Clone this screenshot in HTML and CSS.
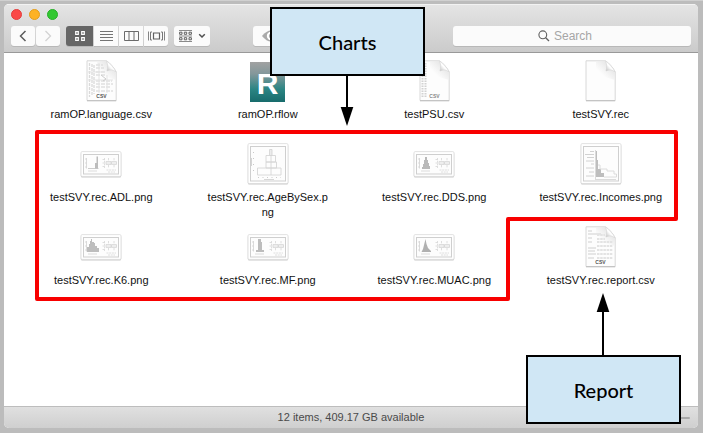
FILE: index.html
```html
<!DOCTYPE html>
<html lang="en">
<head>
<meta charset="utf-8">
<title>Files</title>
<link rel="stylesheet" href="styles.css">
</head>
<body>
<svg class="defs" width="0" height="0" aria-hidden="true">
  <defs>
    <linearGradient id="fold" x1="0" y1="1" x2="1" y2="0">
      <stop offset="0" stop-color="#b4b4b4"/><stop offset=".45" stop-color="#fff"/><stop offset="1" stop-color="#ddd"/>
    </linearGradient>
    <linearGradient id="shade" x1="0" y1="1" x2="1" y2="0">
      <stop offset=".3" stop-color="#fdfdfd"/><stop offset=".75" stop-color="#e2e2e2"/>
    </linearGradient>
    <linearGradient id="teal" x1="0" y1="0" x2="0" y2="1">
      <stop offset="0" stop-color="#a2a2a2"/><stop offset=".3" stop-color="#83979a"/><stop offset=".68" stop-color="#2b8583"/><stop offset="1" stop-color="#176b6c"/>
    </linearGradient>
    <symbol id="page" viewBox="0 0 31 42">
      <path d="M1 .8H20.500C24 3 28 7.500 30.200 12V40.500H1Z" fill="#fdfdfd" stroke="#d8d8d8"/>
      <path d="M1 40.800H30.200" stroke="#bdbdbd"/>
      <path d="M11 1.300H20.500L29.700 12V20L11 14Z" fill="url(#shade)" opacity=".8"/>
      <path d="M20.500 1C24 3 28 7.500 30.200 12C27 9.500 24 9.500 21 11C22 7.500 21.800 4 20.500 1Z" fill="url(#fold)" stroke="#d0d0d0" stroke-width=".5"/>
    </symbol>
    <symbol id="wide" viewBox="0 0 42 27">
      <rect x=".8" y="1.200" width="40.400" height="25.200" rx="1.500" fill="#c9c9c9"/>
      <rect x="1" y=".6" width="40" height="24.800" rx="1.200" fill="#fff" stroke="#dadada" stroke-width=".8"/>
      <rect x="3.500" y="3.500" width="35" height="19.500" fill="#fdfdfd" stroke="#cfcfcf"/>
    </symbol>
    <symbol id="square" viewBox="0 0 42 42">
      <rect x=".8" y="1.200" width="40.400" height="40.200" rx="1.500" fill="#c9c9c9"/>
      <rect x="1" y=".6" width="40" height="39.900" rx="1.200" fill="#fff" stroke="#dadada" stroke-width=".8"/>
      <rect x="3.500" y="3.500" width="35" height="34.500" fill="#fdfdfd" stroke="#cfcfcf"/>
    </symbol>
    <symbol id="boxes" viewBox="0 0 42 27">
      <path d="M24.500 7V17M22.500 8.500H24.500M22.500 12H24.500M22.500 15.500H24.500M28.500 7V10M28.500 14V17M34 7V10M34 14V17M26.500 19H36M28 21H35" fill="none" stroke="#d6d6d6" stroke-width=".8" stroke-dasharray="2 .7"/>
      <path d="M26 10.500H31V13.500H26ZM31.500 10.500H36.500V13.500H31.500ZM26 12H36.500" fill="none" stroke="#d6d6d6" stroke-width=".8"/>
      <path d="M6.500 7V17.500M5 8H6.500M5 12H6.500M5 16H6.500M8 20H17" stroke="#d2d2d2" stroke-width=".8" fill="none"/>
    </symbol>
  </defs>
</svg>

<main class="window">
  <header class="titlebar">
    <div class="lights">
      <button class="light red" aria-label="Close"></button>
      <button class="light amber" aria-label="Minimize"></button>
      <button class="light green" aria-label="Zoom"></button>
    </div>
    <div class="toolbar">
      <div class="nav">
        <button class="tool" aria-label="Back"><svg width="10" height="14" viewBox="0 0 10 14"><path d="M7.500 2L2.500 7L7.500 12" fill="none" stroke="#5c5c5c" stroke-width="1.500"/></svg></button>
        <button class="tool" aria-label="Forward"><svg width="10" height="14" viewBox="0 0 10 14"><path d="M2.500 2L7.500 7L2.500 12" fill="none" stroke="#d2d2d2" stroke-width="1.300"/></svg></button>
      </div>
      <div class="views">
        <button class="tool active" aria-label="Icons"><svg width="10" height="10" viewBox="0 0 10 10"><path d="M.7 .7H3.300V3.300H.7ZM6.700 .7H9.300V3.300H6.700ZM.7 6.700H3.300V9.300H.7ZM6.700 6.700H9.300V9.300H6.700Z" fill="none" stroke="#fff" stroke-width="1.200"/></svg></button>
        <button class="tool" aria-label="List"><svg width="13" height="10" viewBox="0 0 13 10"><path d="M0 .5H13M0 3.500H13M0 6.500H13M0 9.500H13" stroke="#747474"/></svg></button>
        <button class="tool" aria-label="Columns"><svg width="15" height="10" viewBox="0 0 15 10"><path d="M.5 .5H14.500V9.500H.5ZM5 .5V9.500M10 .5V9.500" fill="none" stroke="#6b6b6b"/></svg></button>
        <button class="tool" aria-label="Cover Flow"><svg width="17" height="10" viewBox="0 0 17 10"><path d="M5.500 2H11.500V8H5.500Z" fill="none" stroke="#606060" stroke-width="1.200"/><path d="M.5 .5V9.500M16.500 .5V9.500" stroke="#858585"/><path d="M4 1H2.500V9H4M13 1H14.500V9H13" fill="none" stroke="#777"/></svg></button>
      </div>
      <button class="tool arrange" aria-label="Arrange"><svg width="13" height="12" viewBox="0 0 13 12"><path d="M0 .5H13M0 6H13M0 11.500H13" stroke="#8a8a8a"/><path d="M.6 2.200H3V4.300H.6ZM5.300 2.200H7.700V4.300H5.300ZM10 2.200H12.400V4.300H10ZM.6 7.700H3V9.800H.6ZM5.300 7.700H7.700V9.800H5.300ZM10 7.700H12.400V9.800H10Z" fill="none" stroke="#5f5f5f"/></svg><svg width="8" height="6" viewBox="0 0 8 6"><path d="M1.200 1.200L4 4L6.800 1.200" fill="none" stroke="#505050" stroke-width="1.500"/></svg></button>
      <button class="tool preview" aria-label="Quick Look"><svg width="18" height="12" viewBox="0 0 18 12"><path d="M0 6Q9-5 18 6Q9 17 0 6Z" fill="#aaa"/><circle cx="9" cy="6" r="4.200" fill="#fff"/><circle cx="9" cy="6" r="2.200" fill="#aaa"/></svg></button>
      <label class="search">
        <svg width="12" height="12" viewBox="0 0 12 12"><circle cx="4.800" cy="4.800" r="3.900" fill="none" stroke="#606060" stroke-width="1.100"/><path d="M7.700 7.700L11 11" stroke="#606060" stroke-width="1.300"/></svg>
        <input type="text" placeholder="Search" aria-label="Search">
      </label>
    </div>
  </header>

  <ul class="files">
    <li class="file">
      <div class="icon"><svg width="31" height="42" viewBox="0 0 31 42"><use href="#page"/><path d="M3.500 3V37M6 4V36M8 5V34" stroke="#dadada" stroke-width="1.300" stroke-dasharray="3 1"/><path d="M10 5H17M10 8H18M10 12H19M10 15H20M10 21H26M10 24H27M10 27H24M10 31H27" stroke="#e0e0e0" stroke-width="1.500" stroke-dasharray="4 1"/><path d="M13 3V33M21 15V33M2 12H18M2 20H27" stroke="#e3e3e3"/><path d="M15 15L20 19L17 21" fill="none" stroke="#ccc"/><text class="ext" x="15.500" y="38">CSV</text></svg></div>
      <span class="name">ramOP.language.csv</span>
    </li>
    <li class="file">
      <div class="icon"><svg width="35" height="41" viewBox="0 0 35 41"><rect y="1" width="35" height="40" fill="url(#teal)"/><text class="letter" x="17.500" y="33">R</text></svg></div>
      <span class="name">ramOP.rflow</span>
    </li>
    <li class="file">
      <div class="icon"><svg width="31" height="42" viewBox="0 0 31 42"><use href="#page"/><path d="M3.500 3V38M6.500 3V38" stroke="#d2d2d2" stroke-width="2" stroke-dasharray="1.500 1"/><text class="ext light-ext" x="15.500" y="38">CSV</text></svg></div>
      <span class="name">testPSU.csv</span>
    </li>
    <li class="file">
      <div class="icon"><svg width="31" height="42" viewBox="0 0 31 42"><use href="#page"/></svg></div>
      <span class="name">testSVY.rec</span>
    </li>
    <li class="file">
      <div class="icon"><svg width="42" height="27" viewBox="0 0 42 27"><use href="#wide"/><use href="#boxes"/><path d="M8 17.500H18.500" stroke="#ccc"/><path d="M15 17.500V12H16.500V5.500H18V17.500Z" fill="#bcbcbc"/></svg></div>
      <span class="name">testSVY.rec.ADL.png</span>
    </li>
    <li class="file">
      <div class="icon"><svg width="42" height="42" viewBox="0 0 42 42"><use href="#square"/><path d="M22.500 6.500H25V12.500H22.500ZM19 12.500H28.500V19H19ZM19 19H29.500V25H19ZM10.500 25H34V32H10.500ZM24 6V32" fill="none" stroke="#d6d6d6" stroke-width=".9"/><path d="M6.500 9V30" stroke="#c9c9c9" stroke-dasharray="1 5"/><path d="M4.500 15V23" stroke="#d5d5d5"/><path d="M11 34.500H34" stroke="#ccc" stroke-dasharray="1 3.500"/><path d="M17 36.500H27" stroke="#d6d6d6"/></svg></div>
      <span class="name">testSVY.rec.AgeBySex.png</span>
    </li>
    <li class="file">
      <div class="icon"><svg width="42" height="27" viewBox="0 0 42 27"><use href="#wide"/><use href="#boxes"/><path d="M9 18V16H10V13H11V9H12V6H14V9H15V12H16V15H17V18Z" fill="#b9b9b9"/></svg></div>
      <span class="name">testSVY.rec.DDS.png</span>
    </li>
    <li class="file">
      <div class="icon"><svg width="42" height="42" viewBox="0 0 42 42"><use href="#square"/><path d="M10 8.500H14M5 11.500H14M7 14.500H14M6 18H14M11 21H14M6 25H14M9 29H14M6 33H14" stroke="#d2d2d2"/><path d="M15.500 7V36M15 36.500H36" stroke="#d2d2d2" stroke-width=".8"/><path d="M16 8H17V17H18V26H21V30H24V34H16Z" fill="#bebebe"/><path d="M18 22H20V26H27V28H34V31H36.500V34H24" fill="none" stroke="#dcdcdc"/></svg></div>
      <span class="name">testSVY.rec.Incomes.png</span>
    </li>
    <li class="file">
      <div class="icon"><svg width="42" height="27" viewBox="0 0 42 27"><use href="#wide"/><use href="#boxes"/><path d="M7 18V13H9V10H10V7H11V5H12V8H14V9H15V12H17V14H19V18Z" fill="#bdbdbd"/></svg></div>
      <span class="name">testSVY.rec.K6.png</span>
    </li>
    <li class="file">
      <div class="icon"><svg width="42" height="27" viewBox="0 0 42 27"><use href="#wide"/><use href="#boxes"/><path d="M9 18V16H11V5H14V8H15V16H17V18Z" fill="#bdbdbd"/></svg></div>
      <span class="name">testSVY.rec.MF.png</span>
    </li>
    <li class="file">
      <div class="icon"><svg width="42" height="27" viewBox="0 0 42 27"><use href="#wide"/><use href="#boxes"/><path d="M8.500 18L10 15L11 11L12.500 5L13.500 10L15 14L18 17V18Z" fill="#b0b0b0"/></svg></div>
      <span class="name">testSVY.rec.MUAC.png</span>
    </li>
    <li class="file">
      <div class="icon"><svg width="31" height="42" viewBox="0 0 31 42"><use href="#page"/><path d="M3 5H7M3 8H16M3 12H7M3 16H7M3 22H11M3 25H10M3 28H11M3 32H9" stroke="#dedede" stroke-width="1.400"/><path d="M12 9H20M12 13H20M12 16H28M12 20H28M12 24H28M12 28H28M12 32H28" stroke="#e3e3e3" stroke-width="2" stroke-dasharray="2.500 .7"/><text class="ext" x="15.500" y="38">CSV</text></svg></div>
      <span class="name">testSVY.rec.report.csv</span>
    </li>
  </ul>

  <footer class="status">
    <span>12 items, 409.17 GB available</span>
    <input class="size" type="range" min="0" max="100" value="16" aria-label="Icon size">
  </footer>
</main>

<svg class="outline" viewBox="0 0 703 433" preserveAspectRatio="none" aria-hidden="true">
  <path d="M37 132H676V219H508V299H37Z" fill="none" stroke="#f80000" stroke-width="4" stroke-linejoin="round"/>
</svg>
<div class="callout charts">Charts
  <svg class="arrow" width="14" height="52" viewBox="0 0 14 52"><path d="M7 0V34" stroke="#000" stroke-width="2"/><path d="M.7 33H13.300L7 52Z"/></svg>
</div>
<div class="callout report">Report
  <svg class="arrow" width="14" height="64" viewBox="0 0 14 64"><path d="M7 18V64" stroke="#000" stroke-width="2"/><path d="M.7 19H13.300L7 0Z"/></svg>
</div>
</body>
</html>
```
FILE: styles.css
```css
* { box-sizing: border-box; }

body {
  margin: 0;
  min-height: 100vh;
  display: flex;
  position: relative;
  padding: 4px 5px 5px 4px;
  background: #bcbcbc;
  border-top: 1px solid #d0d0d0;
  font: 11px/15px "Liberation Sans", Arial, sans-serif;
  color: #111;
}

.defs { position: absolute; }

button, input { font: inherit; border: 0; padding: 0; margin: 0; }

.window {
  flex: 1;
  display: flex;
  flex-direction: column;
  margin-top: -1px;
  border-radius: 5px;
  overflow: hidden;
  background: #fff;
}

.titlebar {
  height: 49px;
  padding: 4px 7px 0;
  background: linear-gradient(#e4e4e4, #cbcbcb);
  border-top: 1px solid #f2f2f2;
  border-bottom: 1px solid #999;
}

.lights { display: flex; gap: 7px; height: 17px; }

.light { width: 11px; height: 11px; border-radius: 50%; }
.red { background: #fb4948; border: 1px solid #e23e3d; }
.amber { background: #fdb225; border: 1px solid #e29d1c; }
.green { background: #33c832; border: 1px solid #27ae28; }

.toolbar { display: flex; height: 20px; }

.tool {
  display: flex;
  align-items: center;
  justify-content: center;
  width: 24px;
  height: 20px;
  background: #fbfbfb;
  border-radius: 3px;
  box-shadow: 0 1px 0 #b8b8b8;
}

.nav { display: flex; gap: 1px; }

.views { display: flex; gap: 1px; margin-left: 6px; }
.views .tool { border-radius: 0; }
.views .tool:first-child { width: 27px; border-radius: 3px 0 0 3px; }
.views .tool:last-child { border-radius: 0 3px 3px 0; }
.views .active { background: #666; }

.arrange { width: 36px; gap: 6px; margin-left: 6px; }
.preview { width: 36px; margin-left: 43px; }

.search {
  display: flex;
  align-items: center;
  justify-content: center;
  gap: 4px;
  width: 238px;
  margin-left: auto;
  background: #fbfbfb;
  border-radius: 3px;
  box-shadow: 0 1px 0 #b8b8b8;
}
.search input {
  width: 52px;
  height: 18px;
  font-size: 12px;
  background: none;
  outline: 0;
}
.search input::placeholder { color: #a6a6a6; }

.files {
  flex: 1;
  display: grid;
  grid-template-columns: repeat(4, 1fr);
  grid-auto-rows: 83px;
  margin: 0;
  padding: 7px 14px 0;
  list-style: none;
}

.file { display: flex; flex-direction: column; align-items: center; gap: 5px; }
.icon { display: flex; align-items: center; height: 42px; }

.name {
  width: 124px;
  text-align: center;
  overflow-wrap: anywhere;
}

.ext { font: bold 5px "Liberation Sans", Arial, sans-serif; fill: #555; text-anchor: middle; }
.light-ext { fill: #888; }
.letter { font: bold 30px "Liberation Sans", Arial, sans-serif; fill: #fff; text-anchor: middle; }

.status {
  display: flex;
  align-items: center;
  justify-content: center;
  position: relative;
  height: 22px;
  background: linear-gradient(#e0e0e0, #cfcfcf);
  border-top: 1px solid #bdbdbd;
  color: #4a4a4a;
}

.size {
  position: absolute;
  right: 8px;
  width: 68px;
  height: 12px;
  background: none;
  appearance: none;
}
.size::-webkit-slider-runnable-track { height: 2px; background: #a8a8a8; border-radius: 1px; }
.size::-webkit-slider-thumb {
  appearance: none;
  width: 11px;
  height: 11px;
  margin-top: -5px;
  border-radius: 50%;
  background: #f4f4f4;
  border: 1px solid #aaa;
}

.outline { position: absolute; top: -1px; left: 0; width: 100%; height: 100vh; }

.callout {
  position: absolute;
  display: flex;
  align-items: center;
  justify-content: center;
  width: 155px;
  height: 69px;
  background: #d0e7f5;
  border: 2px solid #000;
  font: 500 20px/24px Lato, "Gill Sans", sans-serif;
  color: #000;
}
.charts { top: 6px; left: 270px; }
.report { top: 354px; left: 526px; }

.arrow { position: absolute; left: 68px; }
.charts .arrow { top: 100%; }
.report .arrow { bottom: 100%; }
```
